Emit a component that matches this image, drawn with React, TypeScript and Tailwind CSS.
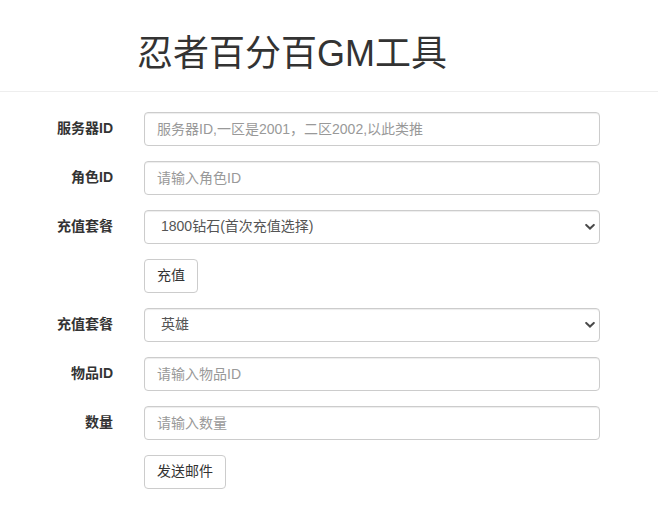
import React from "react";

const font = { fontFamily: '"Liberation Sans", "Noto Sans CJK SC", sans-serif' };

function Chevron() {
  return (
    <svg
      className="pointer-events-none absolute right-[5px] top-1/2 -translate-y-1/2"
      width="10"
      height="7"
      viewBox="0 0 10 7"
      fill="none"
    >
      <path d="M1.2 1.4 L5 5 L8.8 1.4" stroke="#4a4a4a" strokeWidth="2" strokeLinecap="round" />
    </svg>
  );
}

function Row({ label, children }: { label?: string; children: React.ReactNode }) {
  return (
    <div className="flex h-[34px] items-center">
      <label className="w-[113px] shrink-0 text-right text-[14px] font-bold text-[#333]">{label}</label>
      <div className="ml-[31px] w-[456px]">{children}</div>
    </div>
  );
}

function TextInput({ placeholder }: { placeholder: string }) {
  return (
    <input
      type="text"
      placeholder={placeholder}
      className="block h-[34px] w-full rounded-[4px] border border-[#ccc] bg-white px-3 text-[14px] text-[#555] shadow-[inset_0_1px_1px_rgba(0,0,0,0.075)] outline-none placeholder:text-[#999]"
      style={font}
    />
  );
}

function Select({ options }: { options: string[] }) {
  return (
    <div className="relative">
      <select
        className="block h-[34px] w-full appearance-none rounded-[4px] border border-[#ccc] bg-white pl-4 pr-6 text-[14px] text-[#555] shadow-[inset_0_1px_1px_rgba(0,0,0,0.075)] outline-none"
        style={font}
        defaultValue={options[0]}
      >
        {options.map((o) => (
          <option key={o}>{o}</option>
        ))}
      </select>
      <Chevron />
    </div>
  );
}

function Button({ children }: { children: React.ReactNode }) {
  return (
    <button
      type="button"
      className="h-[34px] rounded-[4px] border border-[#ccc] bg-white px-3 text-[14px] text-[#333]"
      style={font}
    >
      {children}
    </button>
  );
}

export default function App() {
  return (
    <div className="min-h-[522px] w-full bg-white text-[14px] text-[#333]" style={font}>
      <div className="border-b border-[#eee] pb-[17px] pl-[137px] pt-[34px]">
        <h1 className="text-[36px] leading-[1.1] font-normal text-[#333]">忍者百分百GM工具</h1>
      </div>
      <form className="flex flex-col gap-[15px] pt-[20px]">
        <Row label="服务器ID">
          <TextInput placeholder="服务器ID,一区是2001，二区2002,以此类推" />
        </Row>
        <Row label="角色ID">
          <TextInput placeholder="请输入角色ID" />
        </Row>
        <Row label="充值套餐">
          <Select options={["1800钻石(首次充值选择)", "英雄"]} />
        </Row>
        <Row>
          <Button>充值</Button>
        </Row>
        <Row label="充值套餐">
          <Select options={["英雄", "1800钻石(首次充值选择)"]} />
        </Row>
        <Row label="物品ID">
          <TextInput placeholder="请输入物品ID" />
        </Row>
        <Row label="数量">
          <TextInput placeholder="请输入数量" />
        </Row>
        <Row>
          <Button>发送邮件</Button>
        </Row>
      </form>
    </div>
  );
}
